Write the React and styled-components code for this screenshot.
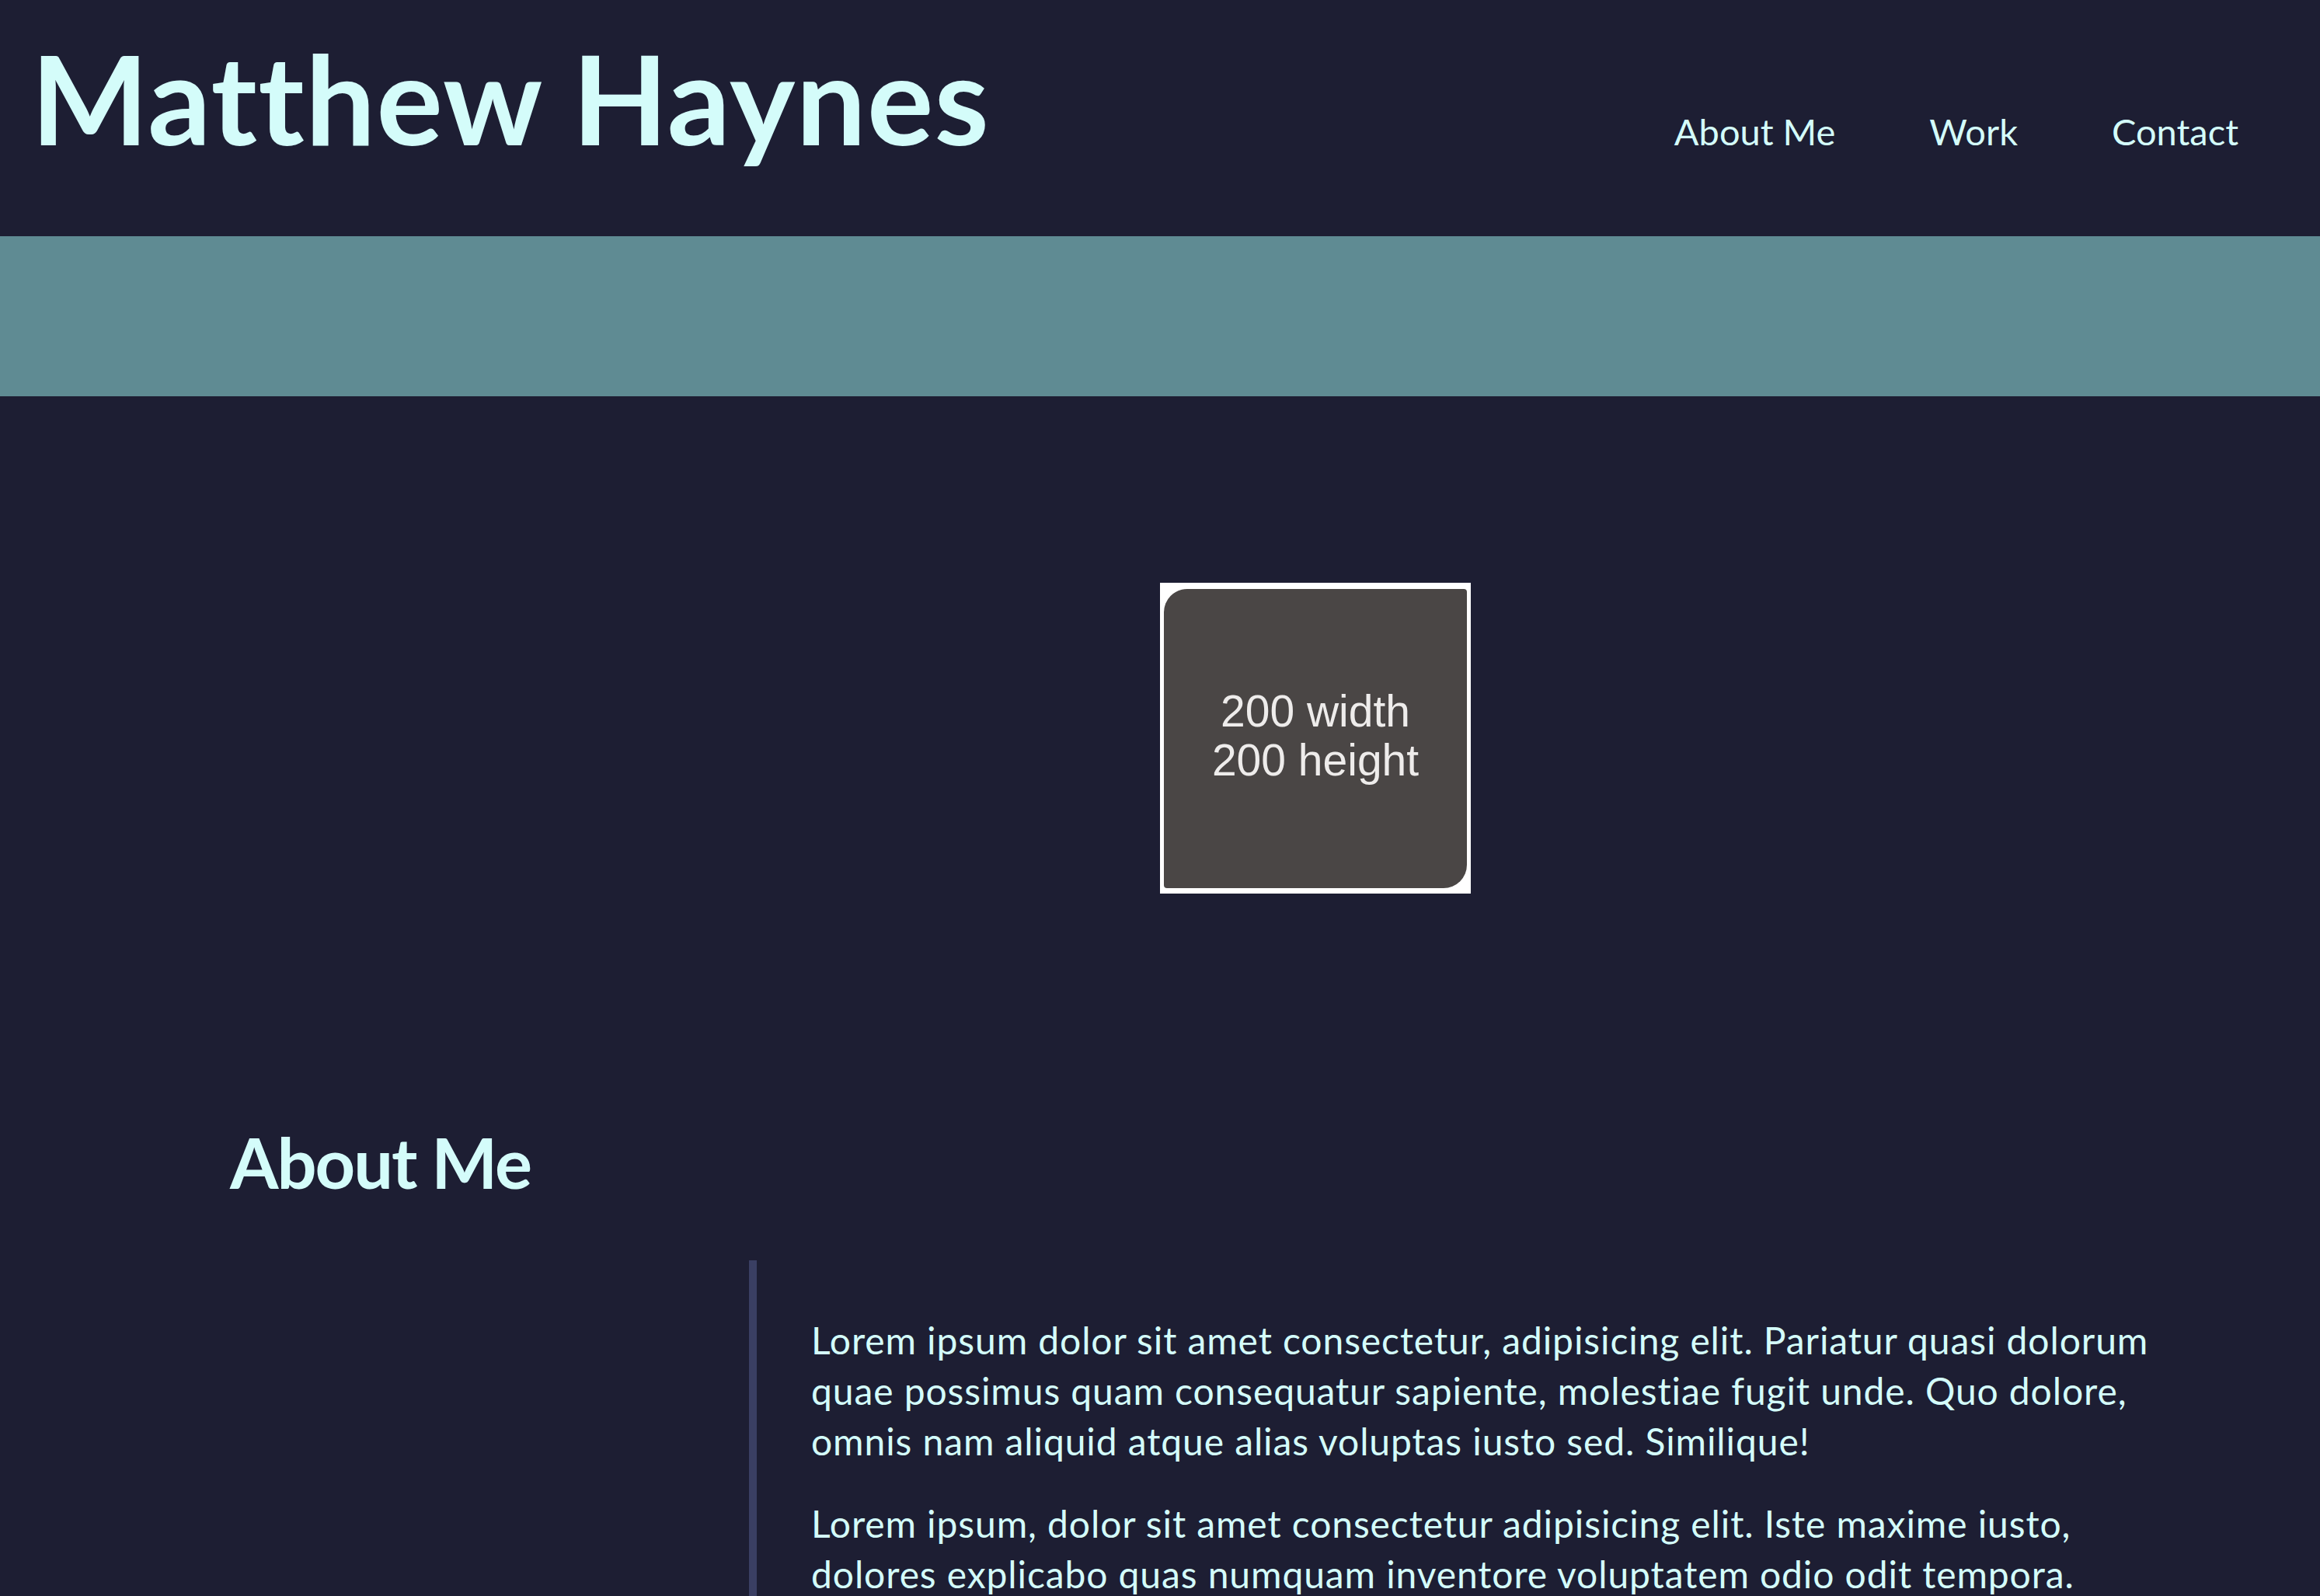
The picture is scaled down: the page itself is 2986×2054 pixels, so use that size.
import React from "react";
import styled, { createGlobalStyle } from "styled-components";

const Global = createGlobalStyle`
  html, body { margin: 0; padding: 0; background: #1d1e33; }
  body { font-family: Lato, "Open Sans", sans-serif; color: #d4fcfa; font-variant-ligatures: none; }
  * { box-sizing: border-box; }
`;

const Page = styled.div`
  min-height: 2054px;
  background: #1d1e33;
`;

const Header = styled.header`
  display: flex;
  justify-content: space-between;
  align-items: baseline;
  height: 304px;
  padding: 45px 105px 0 40px;
`;

const Title = styled.h1`
  margin: 0;
  font-size: 160px;
  line-height: 1;
  font-weight: 700;
  letter-spacing: 1.2px;
  color: #d4fcfa;
`;

const Nav = styled.nav`
  display: flex;
  gap: 121px;
`;

const NavLink = styled.a`
  font-size: 47px;
  color: #d4fcfa;
  text-decoration: none;
`;

const Band = styled.div`
  height: 206px;
  background: #5f8b93;
`;

const Hero = styled.section`
  padding: 240px 0 0 50%;
`;

const Placeholder = styled.div`
  width: 400px;
  height: 400px;
  background: #ffffff;
  padding: 8px 5px 7px 5px;
`;

const PlaceholderInner = styled.div`
  width: 100%;
  height: 100%;
  background: #4a4645;
  border-radius: 30px 4px 30px 4px;
  display: flex;
  flex-direction: column;
  align-items: center;
  justify-content: center;
  font-family: "Liberation Sans", Arial, sans-serif;
  font-size: 57px;
  line-height: 63px;
  color: #eeeceb;
  padding-bottom: 8px;
`;

const About = styled.section`
  margin-top: 300px;
`;

const Heading = styled.h2`
  margin: 0 0 82px 296px;
  font-size: 90px;
  line-height: 1;
  font-weight: 700;
  letter-spacing: -2px;
  color: #d4fcfa;
`;

const Row = styled.div`
  display: grid;
  grid-template-columns: 964px 1fr;
`;

const TextColumn = styled.div`
  border-left: 10px solid #3a3f63;
  padding: 70px 196px 40px 70px;
  display: flex;
  flex-direction: column;
  gap: 41px;
  min-height: 500px;
`;

const Para = styled.p`
  margin: 0;
  font-size: 48px;
  line-height: 65px;
  letter-spacing: 0.9px;
  color: #d4fcfa;
`;

export default function App() {
  return (
    <Page>
      <Global />
      <Header>
        <Title>Matthew Haynes</Title>
        <Nav>
          <NavLink href="#about">About Me</NavLink>
          <NavLink href="#work">Work</NavLink>
          <NavLink href="#contact">Contact</NavLink>
        </Nav>
      </Header>
      <Band />
      <Hero>
        <Placeholder>
          <PlaceholderInner>
            <span>200 width</span>
            <span>200 height</span>
          </PlaceholderInner>
        </Placeholder>
      </Hero>
      <About id="about">
        <Heading>About Me</Heading>
        <Row>
          <div />
          <TextColumn>
            <Para>
              Lorem ipsum dolor sit amet consectetur, adipisicing elit. Pariatur quasi dolorum
              quae possimus quam consequatur sapiente, molestiae fugit unde. Quo dolore,
              omnis nam aliquid atque alias voluptas iusto sed. Similique!
            </Para>
            <Para>
              Lorem ipsum, dolor sit amet consectetur adipisicing elit. Iste maxime iusto,
              dolores explicabo quas numquam inventore voluptatem odio odit tempora.
            </Para>
          </TextColumn>
        </Row>
      </About>
    </Page>
  );
}
